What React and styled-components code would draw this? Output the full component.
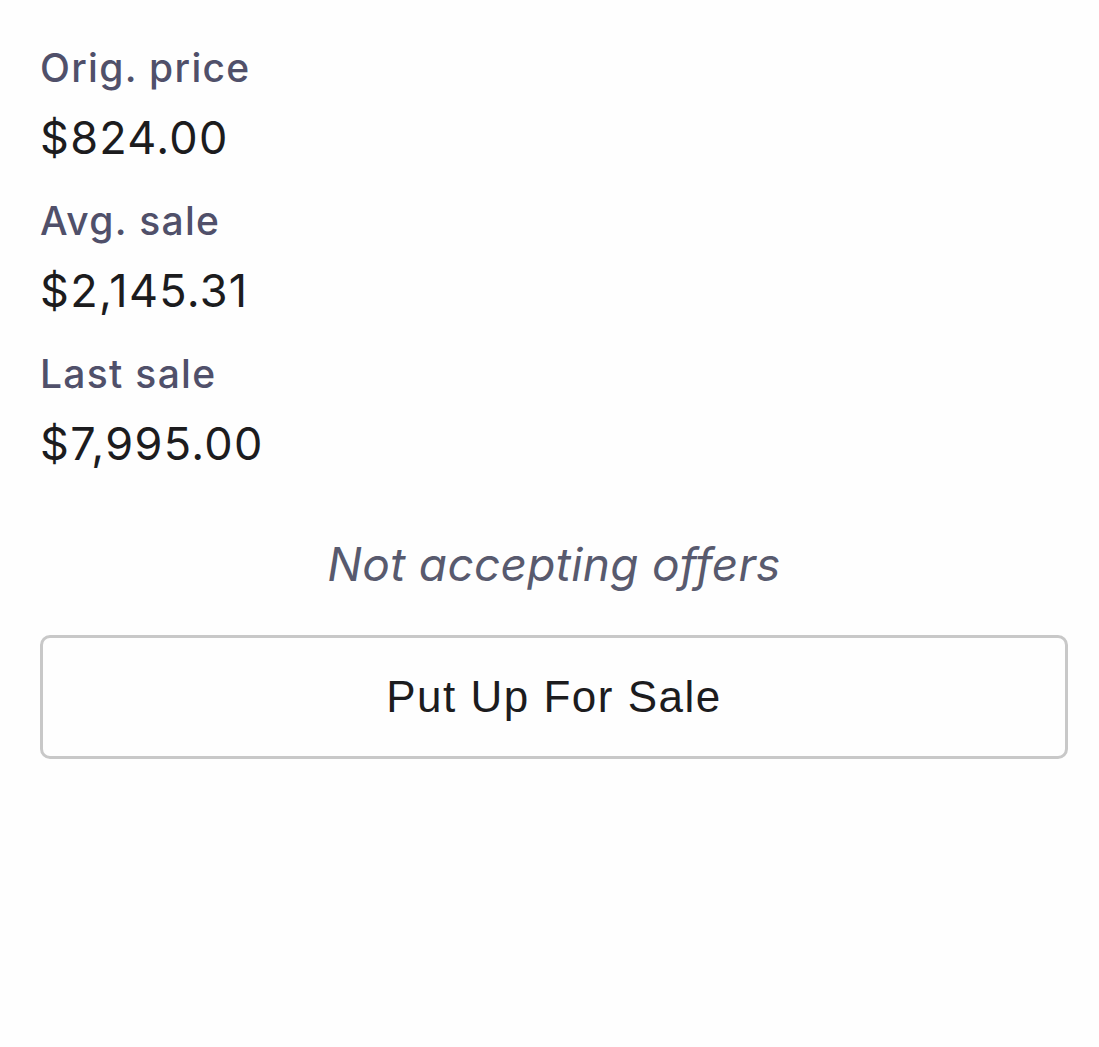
import React from "react";
import styled, { createGlobalStyle } from "styled-components";

const GlobalStyle = createGlobalStyle`
  body {
    margin: 0;
    background: #fefefe;
    font-family: Inter, "Noto Sans", sans-serif;
  }
`;

const Page = styled.div`
  padding: 42px 31px 40px 40px;
  display: flex;
  flex-direction: column;
`;

const Stats = styled.dl`
  margin: 0;
  display: flex;
  flex-direction: column;
  gap: 26px;
`;

const Stat = styled.div`
  display: flex;
  flex-direction: column;
  gap: 13px;
`;

const Label = styled.dt`
  font-size: 39px;
  line-height: 52px;
  font-weight: 500;
  letter-spacing: 1.3px;
  color: #50506a;
`;

const Value = styled.dd`
  margin: 0;
  font-size: 45px;
  line-height: 62px;
  font-weight: 400;
  letter-spacing: 1.3px;
  color: #1c1c1e;
`;

const Notice = styled.p`
  margin: 61px 0 0;
  text-align: center;
  font-size: 46px;
  line-height: 56px;
  font-style: italic;
  letter-spacing: 0.3px;
  color: #585a6e;
`;

const SaleButton = styled.button`
  margin-top: 43px;
  height: 124px;
  width: 100%;
  padding: 0;
  background: #fefefe;
  border: 3px solid #c8c8c8;
  border-radius: 10px;
  font-family: "Liberation Sans", Arial, sans-serif;
  font-size: 44px;
  letter-spacing: 1.5px;
  color: #1c1c1e;
  cursor: pointer;
`;

const stats = [
  { label: "Orig. price", value: "$824.00" },
  { label: "Avg. sale", value: "$2,145.31" },
  { label: "Last sale", value: "$7,995.00" },
];

const App = () => {
  return (
    <Page>
      <GlobalStyle />
      <Stats>
        {stats.map((s) => (
          <Stat key={s.label}>
            <Label>{s.label}</Label>
            <Value>{s.value}</Value>
          </Stat>
        ))}
      </Stats>
      <Notice>Not accepting offers</Notice>
      <SaleButton>Put Up For Sale</SaleButton>
    </Page>
  );
};

export default App;
